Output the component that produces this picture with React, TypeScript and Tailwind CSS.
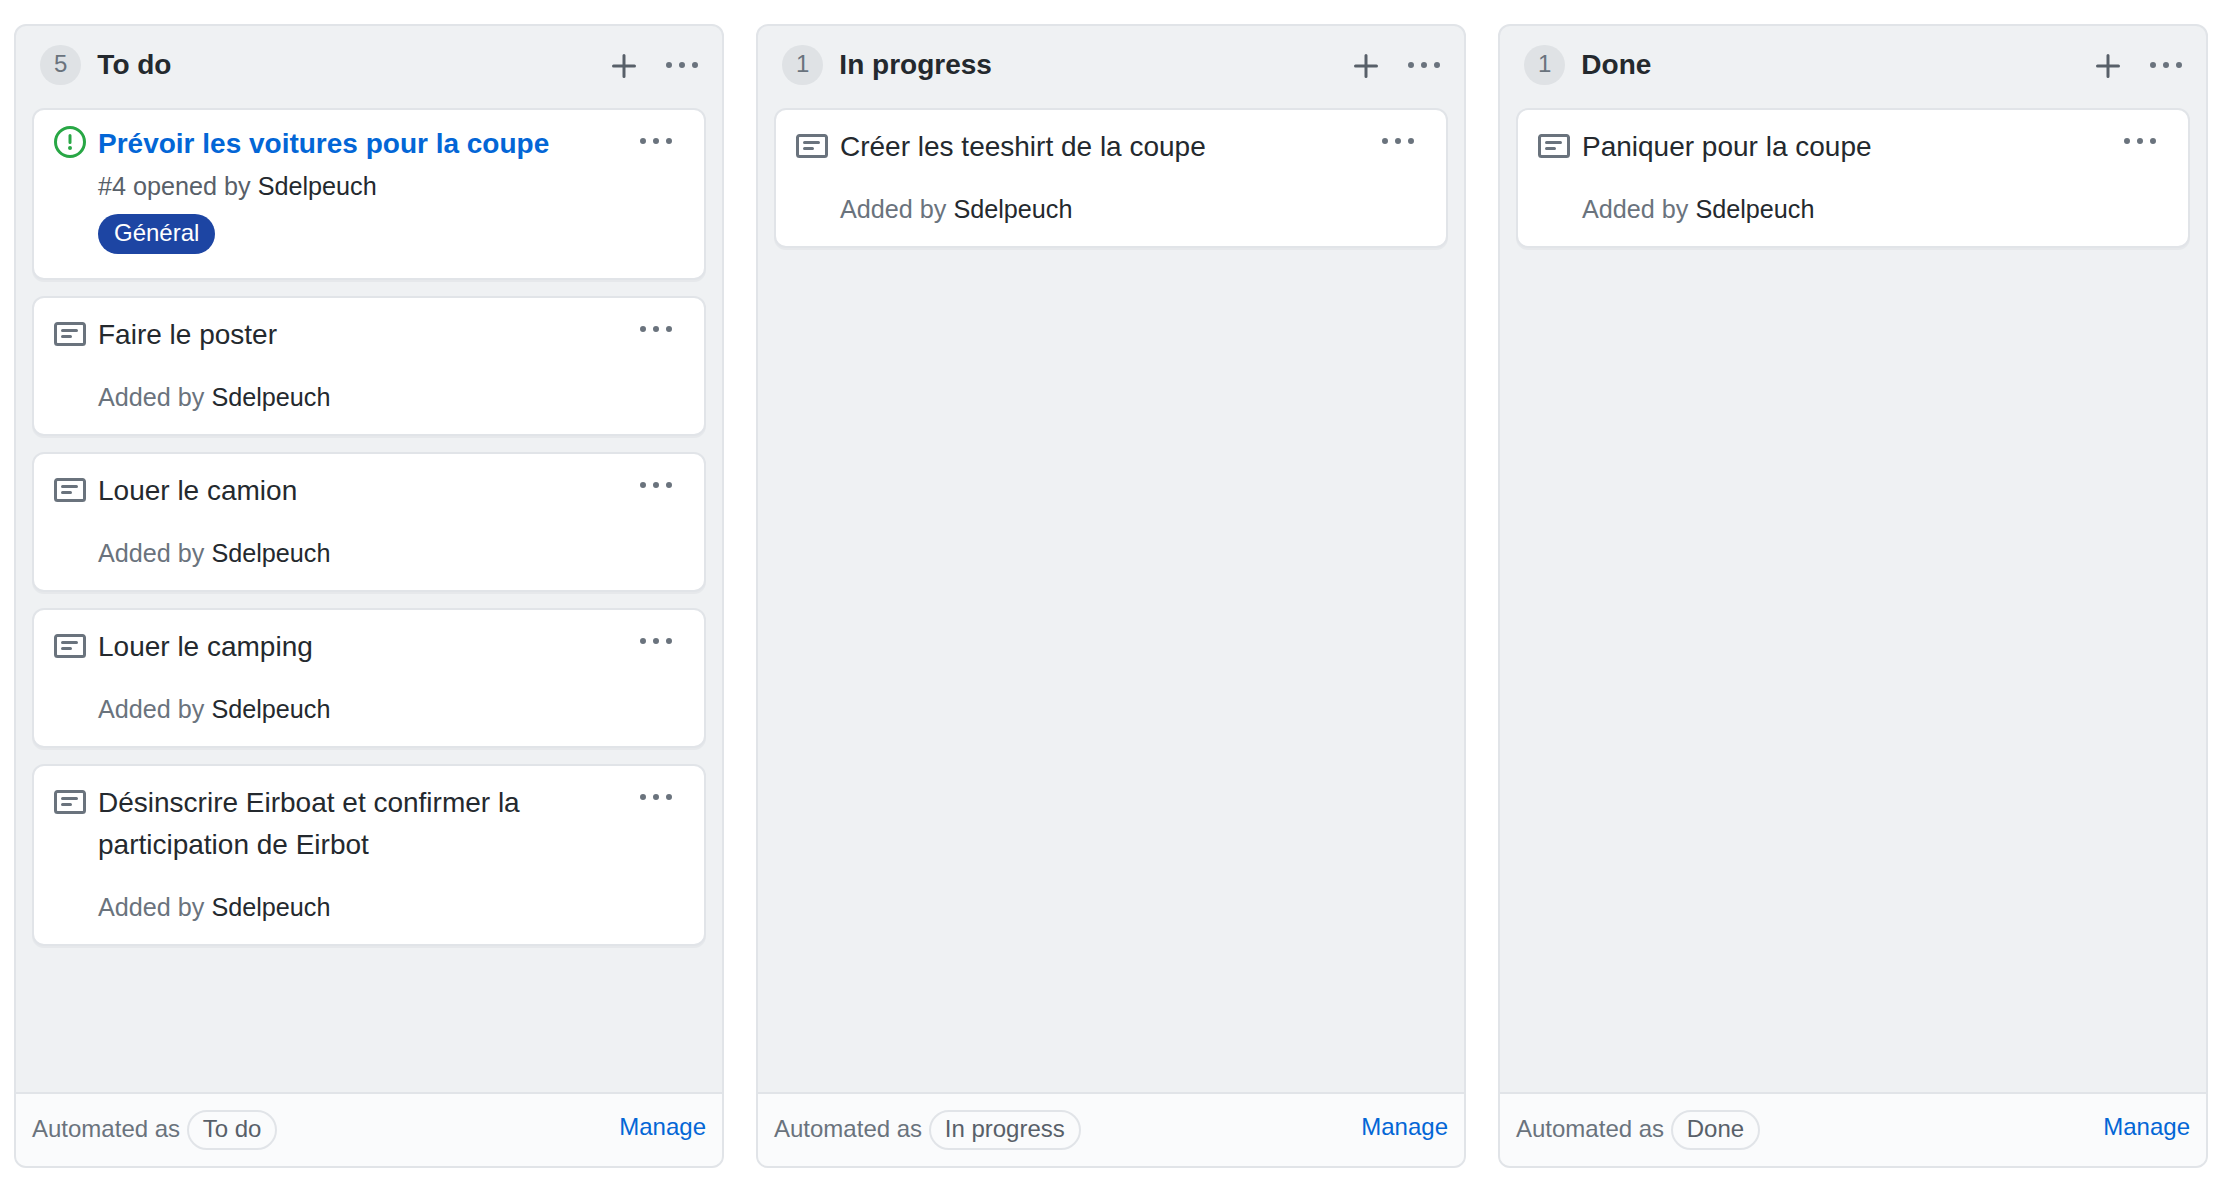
import type { ReactNode } from "react";

const NOTE =
  "M0 3.75C0 2.784.784 2 1.75 2h12.5c.966 0 1.75.784 1.75 1.75v8.5A1.75 1.75 0 0114.25 14H1.75A1.75 1.75 0 010 12.25v-8.5zm1.75-.25a.25.25 0 00-.25.25v8.5c0 .138.112.25.25.25h12.5a.25.25 0 00.25-.25v-8.5a.25.25 0 00-.25-.25H1.75zM3.5 6.25a.75.75 0 01.75-.75h7a.75.75 0 010 1.5h-7a.75.75 0 01-.75-.75zm.75 2.25a.75.75 0 000 1.5h4a.75.75 0 000-1.5h-4z";
const ISSUE =
  "M8 1.5a6.5 6.5 0 100 13 6.5 6.5 0 000-13zM0 8a8 8 0 1116 0A8 8 0 010 8zm9 3a1 1 0 11-2 0 1 1 0 012 0zm-.25-6.25a.75.75 0 00-1.5 0v3.5a.75.75 0 001.5 0v-3.5z";
const KEBAB =
  "M8 9a1.5 1.5 0 100-3 1.5 1.5 0 000 3zM1.5 9a1.5 1.5 0 100-3 1.5 1.5 0 000 3zm13 0a1.5 1.5 0 100-3 1.5 1.5 0 000 3z";
const PLUS =
  "M8 2a.75.75 0 01.75.75v4.5h4.5a.75.75 0 010 1.5h-4.5v4.5a.75.75 0 01-1.5 0v-4.5h-4.5a.75.75 0 010-1.5h4.5v-4.5A.75.75 0 018 2z";

function Icon({ d, className }: { d: string; className: string }) {
  return (
    <svg viewBox="0 0 16 16" width="32" height="32" fillRule="evenodd" className={`block shrink-0 fill-current ${className}`}>
      <path d={d} />
    </svg>
  );
}

function Card({ icon, children }: { icon: ReactNode; children: ReactNode }) {
  return (
    <article className="flex items-start rounded-xl border-2 border-[#e1e4e8] bg-white pr-8 pl-5 shadow-[0_2px_0_rgba(209,213,218,0.3)]">
      {icon}
      <div className="ml-3 min-w-0 flex-1 pr-24">{children}</div>
      <button className="mt-4">
        <Icon d={KEBAB} className="text-[#6a737d]" />
      </button>
    </article>
  );
}

function NoteCard({ text }: { text: string }) {
  return (
    <Card icon={<Icon d={NOTE} className="mt-5 text-[#6a737d]" />}>
      <p className="pt-4 text-[28px] leading-[42px]">{text}</p>
      <p className="mt-[22px] mb-[18px] text-[25.2px] leading-[38px] whitespace-nowrap text-[#6a737d]">
        Added by <a className="text-[#24292e]">Sdelpeuch</a>
      </p>
    </Card>
  );
}

function IssueCard() {
  return (
    <Card icon={<Icon d={ISSUE} className="mt-4 text-[#28a745]" />}>
      <div className="-mr-24 pt-[13px]">
        <a className="block text-[28px] leading-[42px] font-bold text-[#0366d6]">Prévoir les voitures pour la coupe</a>
        <p className="mt-0.5 text-[25.2px] leading-[38px] text-[#586069]">
          #4 opened by <a className="text-[#24292e]">Sdelpeuch</a>
        </p>
        <span className="mt-[9px] mb-6 block h-10 w-fit rounded-full bg-[#1d45a3] px-4 text-2xl leading-[38px] text-white">Général</span>
      </div>
    </Card>
  );
}

function Column({ name, count, children }: { name: string; count: number; children: ReactNode }) {
  return (
    <section className="flex w-[710px] shrink-0 flex-col overflow-hidden rounded-xl border-2 border-[#e1e4e8] bg-[#eff1f3]">
      <header className="flex h-[82px] items-start pr-6 pl-6">
        <span className="mt-[19px] h-10 rounded-full bg-[#dfe2e5] px-3.5 text-2xl leading-[38px] text-[#6a737d]">{count}</span>
        <h3 className="mt-[18px] ml-4 flex-1 text-[28px] leading-[42px] font-bold">{name}</h3>
        <button className="mt-6">
          <Icon d={PLUS} className="text-[#586069]" />
        </button>
        <button className="mt-6 ml-[26px]">
          <Icon d={KEBAB} className="text-[#6a737d]" />
        </button>
      </header>
      <div className="flex flex-1 flex-col gap-4 px-4">{children}</div>
      <footer className="flex h-[74px] items-start justify-between border-t-2 border-[#e1e4e8] bg-[#fafbfc] px-4 text-2xl leading-9">
        <div className="mt-4 flex text-[#6a737d]">
          <span className="mt-px">Automated as</span>
          <span className="ml-[6.67px] h-10 rounded-full border-2 border-[#e1e4e8] px-3.5 leading-[34px] text-[#586069]">{name}</span>
        </div>
        <a className="mt-[15px] text-[#0366d6]">Manage</a>
      </footer>
    </section>
  );
}

export default function App() {
  return (
    <main
      className="flex h-[1184px] gap-8 overflow-hidden bg-white pt-6 pb-4 pl-3.5 text-[#24292e]"
      style={{ fontFamily: '"Liberation Sans", Arial, sans-serif' }}
    >
      <Column name="To do" count={5}>
        <IssueCard />
        <NoteCard text="Faire le poster" />
        <NoteCard text="Louer le camion" />
        <NoteCard text="Louer le camping" />
        <NoteCard text="Désinscrire Eirboat et confirmer la participation de Eirbot" />
      </Column>
      <Column name="In progress" count={1}>
        <NoteCard text="Créer les teeshirt de la coupe" />
      </Column>
      <Column name="Done" count={1}>
        <NoteCard text="Paniquer pour la coupe" />
      </Column>
    </main>
  );
}
